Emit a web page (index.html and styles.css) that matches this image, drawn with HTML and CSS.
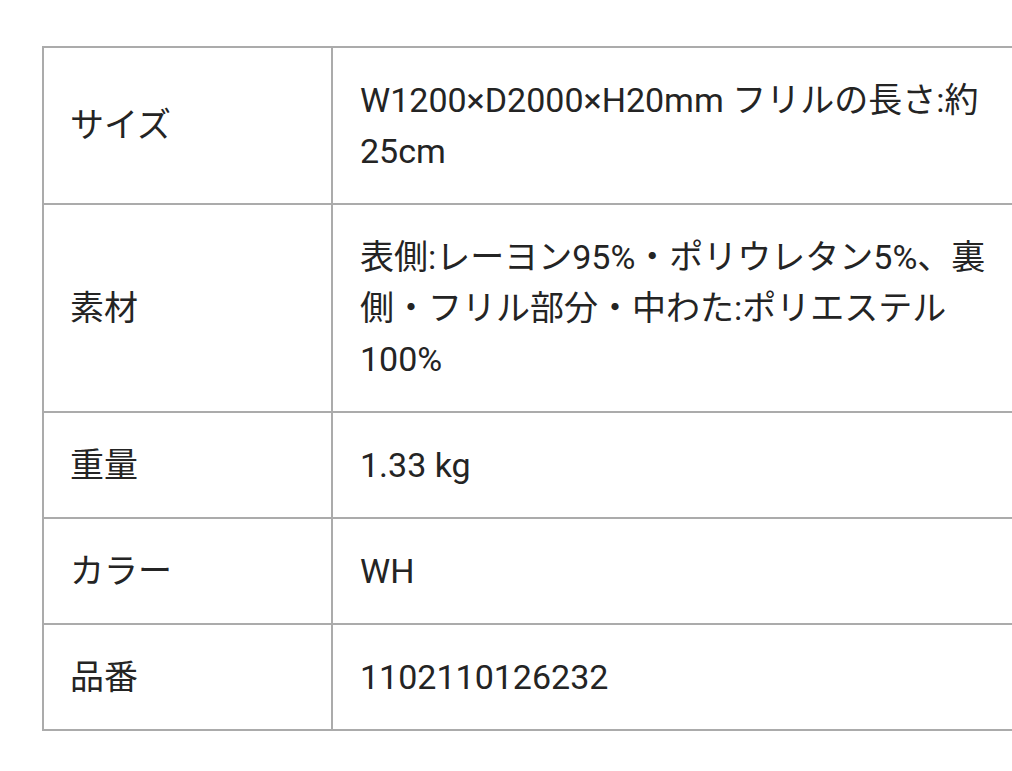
FILE: index.html
```html
<!DOCTYPE html>
<html lang="ja">
<head>
<meta charset="utf-8">
<link rel="stylesheet" href="styles.css">
</head>
<body>
<table class="spec">
  <tr><th>サイズ</th><td>W1200×D2000×H20mm フリルの長さ:約25cm</td></tr>
  <tr><th>素材</th><td>表側:レーヨン95%・ポリウレタン5%、裏側・フリル部分・中わた:ポリエステル100%</td></tr>
  <tr><th>重量</th><td>1.33 kg</td></tr>
  <tr><th>カラー</th><td>WH</td></tr>
  <tr><th>品番</th><td>1102110126232</td></tr>
</table>
</body>
</html>
```
FILE: styles.css
```css
html, body {
  margin: 0;
  padding: 0;
  background: #ffffff;
  overflow: hidden;
}
body {
  font-family: Roboto, "Noto Sans CJK JP", sans-serif;
  font-size: 34px;
  line-height: 51px;
  color: #242424;
}
.spec {
  margin: 46px 0 0 42px;
  border-collapse: separate;
  border-spacing: 0;
  border-top: 2px solid #ababab;
  border-left: 2px solid #ababab;
  table-layout: fixed;
  width: 991px;
}
.spec th,
.spec td {
  box-sizing: border-box;
  border-right: 2px solid #ababab;
  border-bottom: 2px solid #ababab;
  padding: 26.5px 27px 26.5px 26px;
  text-align: left;
  vertical-align: middle;
  font-weight: 400;
}
.spec th {
  width: 289px;
}
.spec td {
  width: 700px;
  padding-left: 27px;
}
```
